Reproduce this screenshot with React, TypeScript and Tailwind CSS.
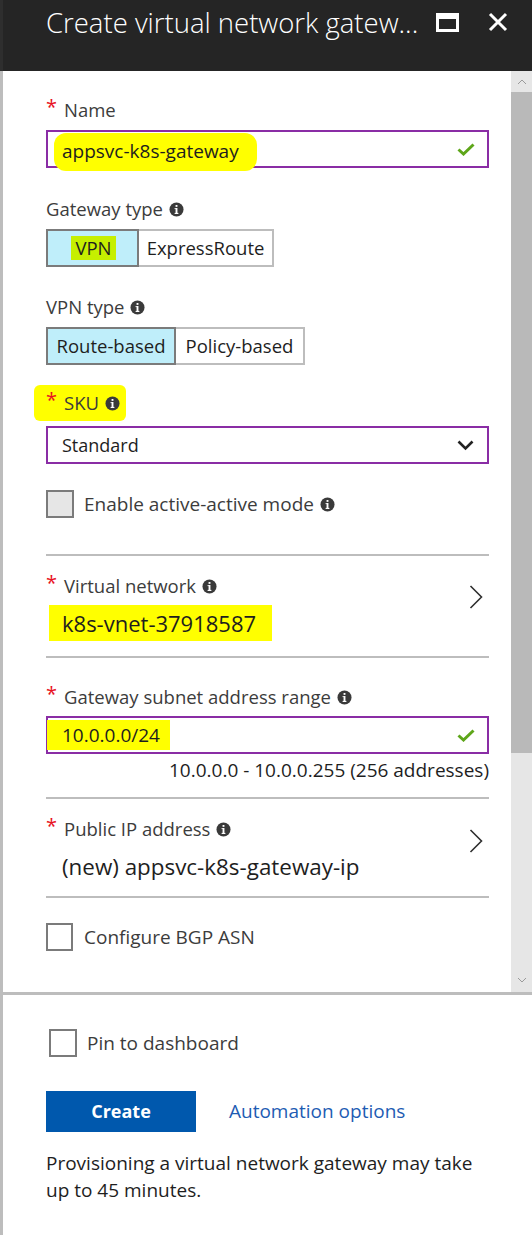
import React from "react";

const Info = () => (
  <svg width="15" height="15" viewBox="0 0 16 16" className="inline-block ml-[6px] shrink-0">
    <circle cx="8" cy="8" r="7.5" fill="#3a3a3a" />
    <rect x="7" y="3.2" width="2" height="2" fill="#fff" />
    <rect x="7" y="6.4" width="2" height="6.4" fill="#fff" />
    <rect x="6" y="6.4" width="1.2" height="1.2" fill="#fff" />
    <rect x="6" y="11.6" width="4" height="1.2" fill="#fff" />
  </svg>
);

const Check = () => (
  <svg width="18" height="13" viewBox="0 0 18 13">
    <path d="M1.5 6.5 L6.5 11 L16.5 1.5" fill="none" stroke="#5ea61a" strokeWidth="3" />
  </svg>
);

const ChevronRight = () => (
  <svg width="14" height="24" viewBox="0 0 14 24">
    <path d="M1.5 1 L12.5 12 L1.5 23" fill="none" stroke="#2f2f2f" strokeWidth="1.6" />
  </svg>
);

const Star = () => (
  <span className="text-[#e81123] text-[20px] leading-none w-[18px] self-start mt-[1px]">*</span>
);

function Label({
  text,
  required,
  info,
  hl,
}: {
  text: string;
  required?: boolean;
  info?: boolean;
  hl?: boolean;
}) {
  const inner = (
    <span className="flex items-center">
      {required && <Star />}
      <span>{text}</span>
      {info && <Info />}
    </span>
  );
  return (
    <div className="flex items-center h-6 text-[18.5px] text-[#3c3c3c]">
      {hl ? (
        <span className="bg-[#ffff00] -ml-[12px] pl-[12px] pr-[6px] py-[4px] rounded-[6px] -my-[4px]">{inner}</span>
      ) : (
        inner
      )}
    </div>
  );
}

function Divider() {
  return <div className="h-[2px] bg-[#bdbdbd]" />;
}

export default function App() {
  return (
    <div className="w-[532px] h-[1235px] bg-white flex flex-col overflow-hidden font-['Open_Sans','Noto_Sans',sans-serif]">
      {/* Header */}
      <div className="h-[71px] bg-[#252525] flex shrink-0">
        <div className="w-[3px] bg-[#2e2e2e]" />
        <div className="flex-1 flex items-start pt-[4px] pl-[43px] pr-[24px]">
          <div className="flex-1 text-white text-[27.5px] font-light whitespace-nowrap overflow-hidden leading-[38px]">
            Create virtual network gatew...
          </div>
          <div className="flex items-center gap-[29px] mt-[8px]">
            <div className="w-[23px] h-[19px] border-[3px] border-t-[6px] border-white" />
            <svg width="20" height="20" viewBox="0 0 20 20">
              <path d="M2 2 L18 18 M18 2 L2 18" stroke="#fff" strokeWidth="3" />
            </svg>
          </div>
        </div>
      </div>

      {/* Body */}
      <div className="flex flex-1 border-l-[3px] border-[#bdbdbd]">
        <div className="flex-1 flex flex-col">
          <div className="h-[921px] flex">
            {/* content */}
            <div className="flex-1 pl-[43px] pr-[22px] pt-[27px] flex flex-col">
              <Label text="Name" required />
              <div className="mt-[8px] h-[38px] border-2 border-[#8a2da5] flex items-center justify-between pl-[14px] pr-[12px]">
                <span className="text-[19px] text-[#1e1e1e] bg-[#ffff00] -ml-[8px] pl-[8px] pr-[18px] pt-[5px] pb-[7px] -mb-[6px] rounded-[12px] leading-[26px]">
                  appsvc-k8s-gateway
                </span>
                <Check />
              </div>

              <div className="mt-[29px]">
                <Label text="Gateway type" info />
              </div>
              <div className="mt-[8px] flex h-[38px] text-[18.5px] text-[#1e1e1e]">
                <div className="w-[93px] bg-[#bfeefa] border-2 border-[#7b7b7b] flex items-center justify-center">
                  <span className="bg-[#c6ef00] px-[4px] -mr-[2px] leading-[24px]">VPN</span>
                </div>
                <div className="w-[135px] border-2 border-l-0 border-[#bdbdbd] flex items-center justify-center">
                  ExpressRoute
                </div>
              </div>

              <div className="mt-[28px]">
                <Label text="VPN type" info />
              </div>
              <div className="mt-[8px] flex h-[38px] text-[18.5px] text-[#1e1e1e]">
                <div className="w-[130px] bg-[#bfeefa] border-2 border-[#7b7b7b] flex items-center justify-center">
                  Route-based
                </div>
                <div className="w-[129px] border-2 border-l-0 border-[#bdbdbd] flex items-center justify-center">
                  Policy-based
                </div>
              </div>

              <div className="mt-[26px]">
                <Label text="SKU" required info hl />
              </div>
              <div className="mt-[11px] h-[38px] border-2 border-[#8a2da5] flex items-center justify-between pl-[14px] pr-[13px] text-[18px] text-[#1e1e1e]">
                <span>Standard</span>
                <svg width="17" height="11" viewBox="0 0 17 11">
                  <path d="M1.5 1.5 L8.5 8.5 L15.5 1.5" fill="none" stroke="#222" strokeWidth="2.6" />
                </svg>
              </div>

              <div className="mt-[26px] flex items-center h-[28px]">
                <div className="w-[28px] h-[28px] bg-[#e6e6e6] border-2 border-[#7b7b7b]" />
                <span className="ml-[10px] text-[19px] text-[#3c3c3c] flex items-center">
                  Enable active-active mode
                  <Info />
                </span>
              </div>

              <div className="mt-[36px]">
                <Divider />
              </div>

              <div className="flex items-center justify-between pr-[6px]">
                <div className="flex flex-col">
                  <div className="mt-[18px]">
                    <Label text="Virtual network" required info />
                  </div>
                  <div className="mt-[10px] ml-[16px]">
                    <span className="text-[22px] text-[#1e1e1e] bg-[#ffff00] -ml-[13px] pl-[13px] pr-[16px] py-[3px] leading-[30px]">
                      k8s-vnet-37918587
                    </span>
                  </div>
                </div>
                <ChevronRight />
              </div>

              <div className="mt-[18px]">
                <Divider />
              </div>

              <div className="mt-[27px]">
                <Label text="Gateway subnet address range" required info />
              </div>
              <div className="mt-[7px] h-[38px] border-2 border-[#8a2da5] flex items-center justify-between pl-[14px] pr-[12px]">
                <span className="text-[19px] text-[#1e1e1e] bg-[#ffff00] -ml-[15px] pl-[15px] pr-[10px] py-[3px] leading-[24px]">
                  10.0.0.0/24
                </span>
                <Check />
              </div>
              <div className="mt-[4px] text-right text-[19px] text-[#1e1e1e] leading-[24px]">
                10.0.0.0 - 10.0.0.255 (256 addresses)
              </div>

              <div className="mt-[15px]">
                <Divider />
              </div>

              <div className="flex items-center justify-between pr-[6px]">
                <div className="flex flex-col">
                  <div className="mt-[18px]">
                    <Label text="Public IP address" required info />
                  </div>
                  <div className="mt-[11px] ml-[16px] text-[22.4px] text-[#1e1e1e] leading-[30px]">
                    (new) appsvc-k8s-gateway-ip
                  </div>
                </div>
                <ChevronRight />
              </div>

              <div className="mt-[14px]">
                <Divider />
              </div>

              <div className="mt-[25px] flex items-center h-[28px]">
                <div className="w-[27px] h-[28px] bg-white border-2 border-[#7b7b7b]" />
                <span className="ml-[11px] text-[19px] text-[#3c3c3c]">Configure BGP ASN</span>
              </div>
            </div>

            {/* scrollbar */}
            <div className="w-[21px] bg-[#e6e6e6] flex flex-col">
              <div className="h-[21px] flex items-center justify-center">
                <svg width="10" height="6" viewBox="0 0 10 6">
                  <path d="M1 5 L5 1 L9 5" fill="none" stroke="#9a9a9a" strokeWidth="1" />
                </svg>
              </div>
              <div className="h-[661px] bg-[#b9b9b9]" />
              <div className="flex-1" />
              <div className="h-[21px] flex items-center justify-center pb-[3px]">
                <svg width="10" height="6" viewBox="0 0 10 6">
                  <path d="M1 1 L5 5 L9 1" fill="none" stroke="#9a9a9a" strokeWidth="1" />
                </svg>
              </div>
            </div>
          </div>

          <div className="h-[3px] bg-[#bdbdbd]" />

          {/* footer */}
          <div className="pl-[43px] pt-[34px] flex flex-col">
            <div className="flex items-center h-[28px] ml-[3px]">
              <div className="w-[28px] h-[28px] border-2 border-[#7b7b7b]" />
              <span className="ml-[10px] text-[19px] text-[#3c3c3c]">Pin to dashboard</span>
            </div>
            <div className="mt-[34px] flex items-center">
              <div className="w-[150px] h-[41px] bg-[#0058ad] text-white font-bold text-[18px] flex items-center justify-center">
                Create
              </div>
              <span className="ml-[33px] text-[19px] text-[#1e5cb3]">Automation options</span>
            </div>
            <div className="mt-[18px] text-[19px] text-[#1e1e1e] leading-[27px] w-[440px]">
              Provisioning a virtual network gateway may take up to 45 minutes.
            </div>
          </div>
        </div>
      </div>
    </div>
  );
}
